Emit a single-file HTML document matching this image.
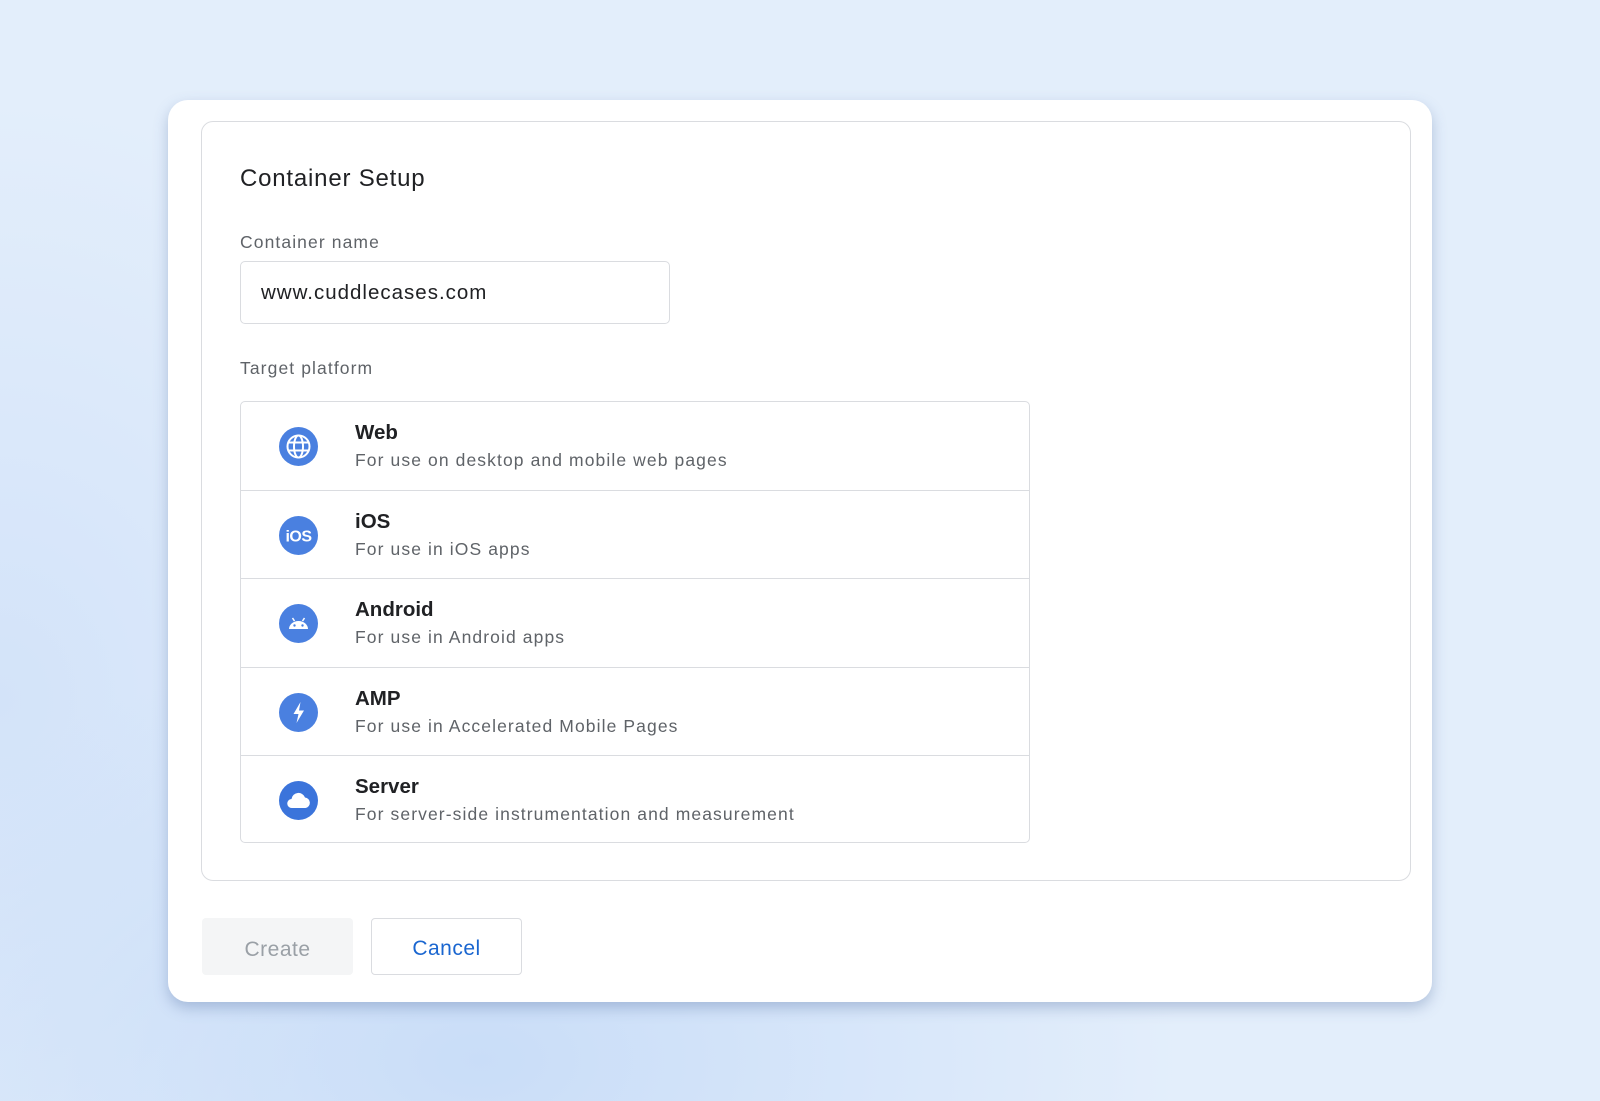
<!DOCTYPE html>
<html><head><meta charset="utf-8"><style>
*{margin:0;padding:0;box-sizing:border-box}
body{width:1600px;height:1101px;overflow:hidden;font-family:"Liberation Sans",Arial,sans-serif;
background:radial-gradient(ellipse 700px 420px at 480px 1060px,#c9ddf8 0%,rgba(201,221,248,0) 100%),radial-gradient(ellipse 500px 600px at 0px 700px,#d3e3f9 0%,rgba(211,227,249,0) 100%),#e3eefb;position:relative}
.card{position:absolute;left:168px;top:100px;width:1264px;height:902px;background:#fff;border-radius:20px;box-shadow:0 6px 14px rgba(80,110,160,.35)}
.inner{position:absolute;left:33px;top:21px;width:1210px;height:760px;border:1.5px solid #dadce0;border-radius:12px}
.abs{position:absolute}
.title{left:38px;top:43px;font-size:24px;color:#202124;letter-spacing:.8px}
.lab{font-size:17.5px;color:#5f6368;letter-spacing:1.1px}
.input{left:38px;top:139px;width:430px;height:63px;border:1.5px solid #dadce0;border-radius:5px;font-size:20.5px;color:#202124;padding:19px 0 0 20px;letter-spacing:1px}
.list{left:38px;top:279px;width:790px;height:442px;border:1.5px solid #dadce0;border-radius:5px}
.row{position:relative;height:88.5px;border-bottom:1.5px solid #dadce0}
.row:last-child{border-bottom:none}
.ic{position:absolute;left:38px;top:25px;width:39px;height:39px;border-radius:50%;background:#4a80e0}
.rt{position:absolute;left:114px;top:19px;font-size:20.5px;color:#202124;font-weight:bold}
.rs{position:absolute;left:114px;top:48px;font-size:17.5px;color:#5f6368;letter-spacing:1.1px}
.btn{top:821px;width:151px;height:57px;border-radius:4px;font-size:21px;text-align:center;line-height:57px;letter-spacing:.5px}
</style></head><body>
<div class="card">
 <div class="inner">
  <div class="abs title">Container Setup</div>
  <div class="abs lab" style="left:38px;top:110px">Container name</div>
  <div class="abs input">www.cuddlecases.com</div>
  <div class="abs lab" style="left:38px;top:236px">Target platform</div>
  <div class="abs list">
   <div class="row"><div class="ic"><svg width="39" height="39" viewBox="0 0 39 39"><g fill="none" stroke="#fff" stroke-width="2"><circle cx="19.5" cy="19.5" r="11"/><ellipse cx="19.5" cy="19.5" rx="4.5" ry="11"/><path d="M9 15.5h21M9 23.5h21"/></g></svg></div><div class="rt">Web</div><div class="rs">For use on desktop and mobile web pages</div></div>
   <div class="row"><div class="ic"><svg width="39" height="39" viewBox="0 0 39 39"><text x="19.5" y="25.5" text-anchor="middle" font-family="Liberation Sans,sans-serif" font-weight="bold" font-size="16" fill="#fff" letter-spacing="-.5">iOS</text></svg></div><div class="rt">iOS</div><div class="rs">For use in iOS apps</div></div>
   <div class="row"><div class="ic"><svg width="39" height="39" viewBox="0 0 39 39"><path d="M10 25a9.5 8 0 0 1 19 0z" fill="#fff"/><path d="M13.5 14l2 3M25.5 14l-2 3" stroke="#fff" stroke-width="1.5"/><circle cx="15.5" cy="21.5" r="1.2" fill="#4a80e0"/><circle cx="23.5" cy="21.5" r="1.2" fill="#4a80e0"/></svg></div><div class="rt">Android</div><div class="rs">For use in Android apps</div></div>
   <div class="row"><div class="ic"><svg width="39" height="39" viewBox="0 0 39 39"><path d="M21.5 9l-7 12h5l-2 9 7.5-12.5h-5z" fill="#fff"/></svg></div><div class="rt">AMP</div><div class="rs">For use in Accelerated Mobile Pages</div></div>
   <div class="row"><div class="ic" style="background:#3b74db"><svg width="39" height="39" viewBox="0 0 39 39"><path d="M13 27a4.5 4.5 0 0 1-.5-9 7 7 0 0 1 13.5-1.5 5.3 5.3 0 0 1 .5 10.5z" fill="#fff"/></svg></div><div class="rt">Server</div><div class="rs">For server-side instrumentation and measurement</div></div>
  </div>
 </div>
 <div class="abs btn" style="left:34px;top:818px;background:#f4f5f6;color:#9aa0a6;line-height:63px">Create</div>
 <div class="abs btn" style="left:203px;top:818px;border:1.5px solid #dadce0;color:#1a66d0;line-height:60px">Cancel</div>
</div>
</body></html>
